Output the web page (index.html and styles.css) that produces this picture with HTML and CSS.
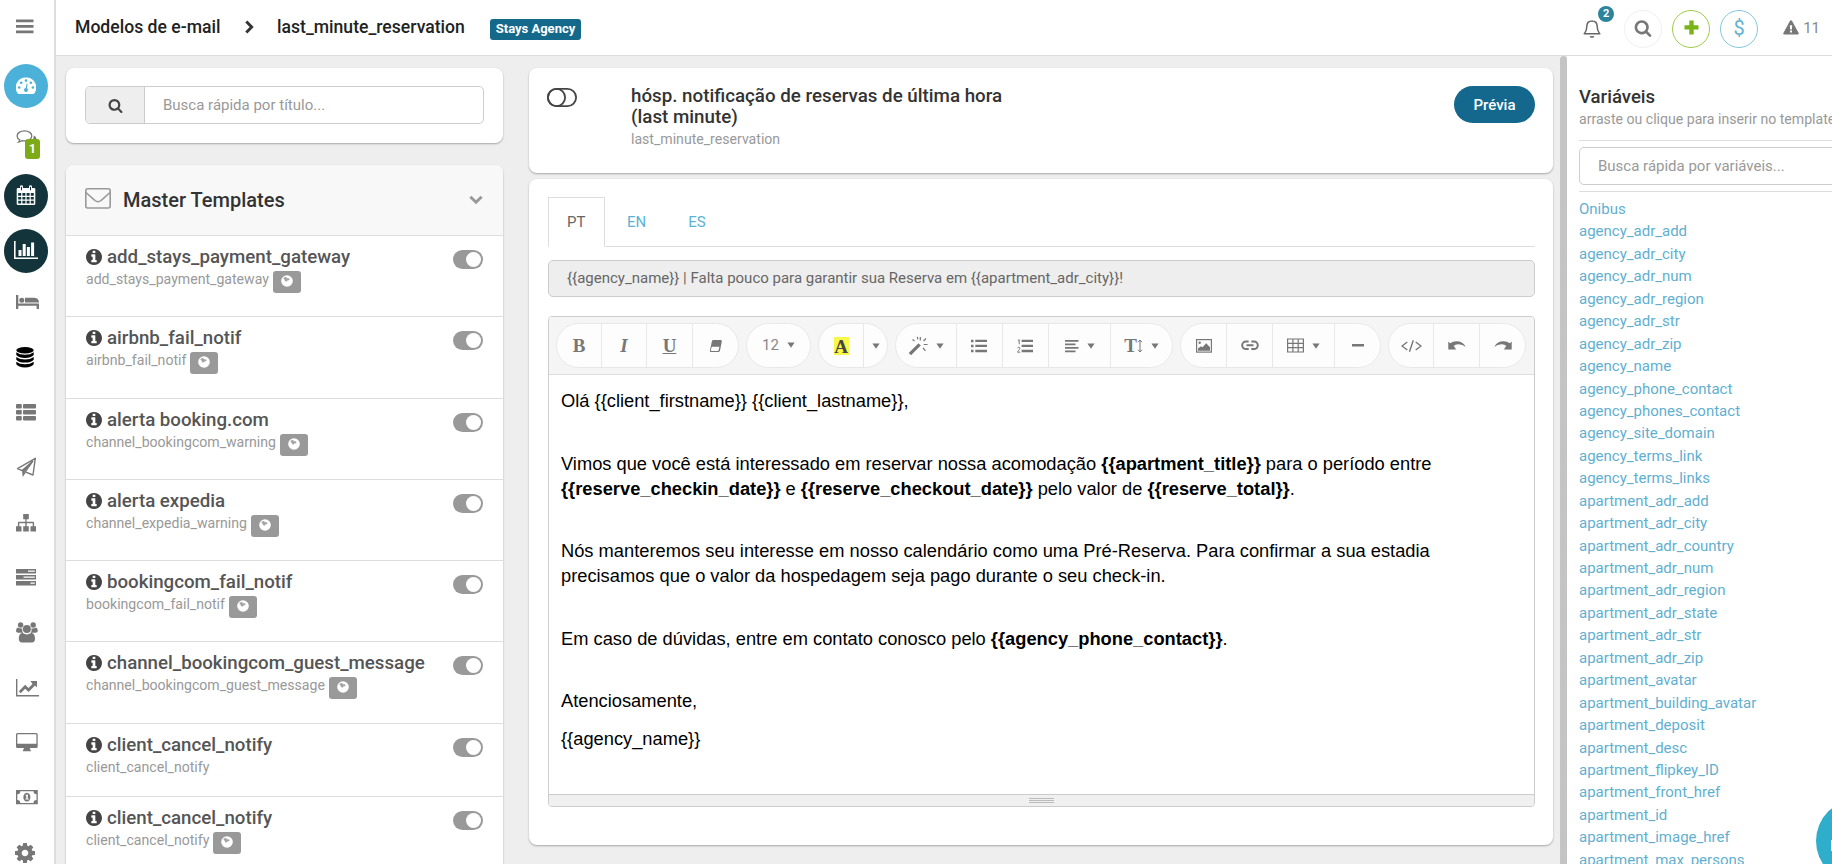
FILE: index.html
```html
<!DOCTYPE html>
<html lang="pt-BR">
<head>
    <meta charset="UTF-8">
    <meta name="viewport" content="width=device-width, initial-scale=1.0">
    <title>Modelos de e-mail</title>
    <link rel="stylesheet" href="styles.css">
</head>
<body>
    <!-- Shared icons -->
    <svg class="sprite" width="0" height="0">
        <symbol id="i-search" viewBox="0 0 1792 1792"><path d="M1216 832q0-185-131.500-316.500t-316.500-131.500-316.500 131.500-131.500 316.500 131.500 316.500 316.500 131.500 316.500-131.500 131.500-316.500zm512 832q0 52-38 90t-90 38q-54 0-90-38l-343-342q-179 124-399 124-143 0-273.500-55.500t-225-150-150-225-55.500-273.500 55.500-273.500 150-225 225-150 273.500-55.500 273.500 55.500 225 150 150 225 55.500 273.500q0 220-124 399l343 343q37 37 37 90z"/></symbol>
        <symbol id="i-info" viewBox="128 128 1536 1536"><path d="M1152 1376v-160q0-14-9-23t-23-9h-96v-512q0-14-9-23t-23-9h-320q-14 0-23 9t-9 23v160q0 14 9 23t23 9h96v320h-96q-14 0-23 9t-9 23v160q0 14 9 23t23 9h448q14 0 23-9t9-23zm-128-896v-160q0-14-9-23t-23-9h-192q-14 0-23 9t-9 23v160q0 14 9 23t23 9h192q14 0 23-9t9-23zm640 416q0 209-103 385.500t-279.500 279.500-385.500 103-385.500-103-279.500-279.500-103-385.500 103-385.500 279.500-279.500 385.500-103 385.500 103 279.500 279.500 103 385.500z"/></symbol>
        <symbol id="i-globe" viewBox="0 0 12 12"><circle cx="6" cy="6" r="5.800" fill="#fff"/><path d="M2.200 3.200 4 2l1.600.3.200 1.200 1.200-.4L8.600 4 8 5.200l-1.700.3-.8 1.300L4 5.900l-.5-1.500z" fill="#a4a4a4"/></symbol>
        <symbol id="i-caret" viewBox="0 0 8 6"><path d="M.4.500h7.200L4 5.700z"/></symbol>
    </svg>

    <div class="app">
        <aside class="sidebar">
            <a class="side-item side-menu"><svg width="18" height="15" viewBox="0 0 18 15"><path d="M0 .5h17.500v2.700H0zM0 6h17.500v2.700H0zM0 11.500h17.500v2.700H0z"/></svg></a>
            <a class="side-item side-dash"><span class="circle circle-blue"><svg width="20" height="18" viewBox="0 0 20 18"><path fill="#fff" d="M10 .5a10 10 0 0 1 8.700 15.300q-.6 1.200-1.600 1.200H2.900q-1 0-1.600-1.200A10 10 0 0 1 10 .5z"/><g fill="#4bb1d8"><circle cx="3.200" cy="10.500" r="1.300"/><circle cx="5.200" cy="5.800" r="1.300"/><circle cx="10" cy="3.600" r="1.300"/><circle cx="14.900" cy="5.800" r="1.300"/><circle cx="16.900" cy="10.500" r="1.300"/><circle cx="10" cy="13" r="2"/><path d="m9.400 12 1.300-5.500 1 .2-1.100 5.600z"/></g></svg></span></a>
            <a class="side-item side-chat"><svg width="22" height="16" viewBox="0 0 22 16"><path d="M8.500.9c4.200 0 7.300 2.300 7.300 5s-3.100 5-7.300 5c-.9 0-1.700-.1-2.400-.3-1 .8-2.100 1.300-3.500 1.500.7-.8 1-1.500 1.100-2.300C2 8.900 1.100 7.500 1.100 5.900c0-2.700 3.200-5 7.400-5z" fill="none" stroke="#777" stroke-width="1.300"/><path d="M18 5.500c1.600 1 2.500 2.200 2.500 4H17z"/></svg><span class="side-badge">1</span></a>
            <a class="side-item"><span class="circle"><svg width="20" height="21" viewBox="0 0 20 21"><path fill="#fff" d="M2 3h2V1.500Q4 .3 5.500.3T7 1.500V3h6V1.500q0-1.200 1.500-1.200T16 1.500V3h2q1.300 0 1.300 1.300v14.400q0 1.300-1.300 1.300H2Q.7 20 .7 18.700V4.300Q.7 3 2 3z"/><g fill="#14343b"><path d="M2.200 8h3v2.800h-3zM6.400 8h3v2.800h-3zM10.600 8h3v2.800h-3zM14.800 8h3v2.800h-3zM2.200 11.900h3v2.700h-3zM6.400 11.900h3v2.700h-3zM10.600 11.900h3v2.700h-3zM14.800 11.900h3v2.700h-3zM2.200 15.800h3v2.700h-3zM6.400 15.800h3v2.700h-3zM10.600 15.800h3v2.700h-3zM14.800 15.800h3v2.700h-3zM5 1.700h1v3.500H5zM14 1.700h1v3.500h-1z"/></g></svg></span></a>
            <a class="side-item"><span class="circle"><svg width="24" height="19" viewBox="0 0 24 19"><path fill="#fff" d="M0 0h1.600v16.500H24V18H0zM4.500 9h3v6h-3zM8.700 3h3v12h-3zM12.900 6h3v9h-3zM17.100 1.500h3V15h-3z"/></svg></span></a>
            <nav class="side-list">
                <a class="side-item"><svg width="23" height="15" viewBox="0 0 23 15"><path d="M0 0h2.300v8.500H23V14h-2.400v-3.200H2.300V14H0z"/><circle cx="5.800" cy="5.200" r="2.500"/><path d="M9 2.800h8.500q5.500 0 5.500 4.800H9z"/></svg></a>
                <a class="side-item side-active"><svg width="18" height="21" viewBox="0 0 18 21"><ellipse cx="9" cy="3.300" rx="8.700" ry="3.200"/><path d="M.3 5.200q3.200 2.600 8.700 2.600t8.700-2.600v2.900q-2.600 2.900-8.700 2.900T.3 8.100zM.3 10q3.200 2.600 8.700 2.600t8.700-2.600v2.700q-2.600 2.900-8.700 2.900T.3 12.700zM.3 14.700q3.200 2.600 8.700 2.600t8.700-2.600v2.600Q15.800 20.400 9 20.400T.3 17.300z"/></svg></a>
                <a class="side-item"><svg width="20" height="17" viewBox="0 0 20 17"><g><rect width="5.800" height="4.500" rx="1"/><rect x="7" width="13" height="4.500" rx="1"/><rect y="6" width="5.800" height="4.500" rx="1"/><rect x="7" y="6" width="13" height="4.500" rx="1"/><rect y="12" width="5.800" height="4.500" rx="1"/><rect x="7" y="12" width="13" height="4.500" rx="1"/></g></svg></a>
                <a class="side-item"><svg width="21" height="21" viewBox="0 0 21 21"><path d="M19.300 1.300 1.500 11.600l4.700 2 10.500-9.300-7.500 10.500 7.800 3.200z" fill="none" stroke="#777" stroke-width="1.400" stroke-linejoin="round"/><path d="M16.800 4 6 13.300l.7 6.700 3-4.200-1.200-.7z"/></svg></a>
                <a class="side-item"><svg width="20" height="18" viewBox="0 0 20 18"><path d="M7.200 0h5.600v5.300h-2.200v2.500h6.500q1 0 1 1v3.500H20v5.200h-5.500v-5.200h2.200V9.200h-6v3.100h2.100v5.200H7.200v-5.200h2.100V9.200h-6v3.100h2.200v5.200H0v-5.200h1.900V8.800q0-1 1-1h6.400V5.300H7.200z"/></svg></a>
                <a class="side-item"><svg width="20" height="17" viewBox="0 0 20 17"><path fill-rule="evenodd" d="M0 0h20v4.500H0zm12 1.500v1.300h6.800V1.500zM0 6h20v4.500H0zm7.500 1.500v1.300h11.300V7.500zM0 12h20v4.500H0zm14.500 1.500v1.300h4.300v-1.300z"/></svg></a>
                <a class="side-item"><svg width="22" height="21" viewBox="0 0 22 21"><circle cx="4.600" cy="3" r="2.700"/><circle cx="17.200" cy="3" r="2.700"/><circle cx="10.900" cy="7" r="4"/><path d="M1.800 5.500q2.800 1.500 4.500.8-.5 2.500.8 4.500H2.300Q0 10.800 0 9q0-2.800 1.800-3.500zM20 5.500q-2.800 1.500-4.500.8.500 2.500-.8 4.500h4.800q2.300 0 2.300-1.800 0-2.800-1.800-3.500zM6.500 10.800q4.400 3.400 8.800 0 3.700.7 3.700 6 0 3.600-3 3.600H6q-3.200 0-3.200-3.600 0-5.300 3.700-6z"/></svg></a>
                <a class="side-item"><svg width="23" height="18" viewBox="0 0 23 18"><path d="M0 0h1.400v16H23v1.500H0zM14.500 2H21v6.500l-2-2-6.500 6.500-3.300-3.300-4.500 4.600-1.900-2 6.400-6.500 3.300 3.300 4-4z"/></svg></a>
                <a class="side-item"><svg width="22" height="19" viewBox="0 0 22 19"><path fill-rule="evenodd" d="M1.500 0h18.700q1.500 0 1.500 1.500v12q0 1.500-1.500 1.500h-6.400q0 1.500 1 2.200v1H6.900v-1q1-.7 1-2.200H1.500Q0 15 0 13.500v-12Q0 0 1.500 0zm.3 1.300q-.5 0-.5.500v9h19.100v-9q0-.5-.5-.5z"/></svg></a>
                <a class="side-item"><svg width="22" height="15" viewBox="0 0 22 15"><path fill-rule="evenodd" d="M0 0h21.800v14.300H0zm4.300 1.300a3 3 0 0 1-3 3V10a3 3 0 0 1 3 3h13.200a3 3 0 0 1 3-3V4.300a3 3 0 0 1-3-3zM10.900 2.800c4.700 0 4.700 8.800 0 8.800s-4.700-8.800 0-8.800zm-1.600 2.800 1 .8v2.300h-1v.9h3.500v-.9h-1V4.500h-.9z"/></svg></a>
                <a class="side-item side-cog"><svg width="20" height="20" viewBox="128 128 1536 1536"><path d="M1152 896q0-106-75-181t-181-75-181 75-75 181 75 181 181 75 181-75 75-181zm512-109v222q0 12-8 23t-20 13l-185 28q-19 54-39 91 35 50 107 138 10 12 10 25t-9 23q-27 37-99 108t-94 71q-12 0-26-9l-138-108q-44 23-91 38-16 136-29 186-7 28-36 28h-222q-14 0-24.500-8.500t-11.500-21.500l-28-184q-49-16-90-37l-141 107q-10 9-25 9-14 0-25-11-126-114-165-168-7-10-7-23 0-12 8-23 15-21 51-66.500t54-70.500q-27-50-41-99l-183-27q-13-2-21-12.500t-8-23.500v-222q0-12 8-23t19-13l186-28q14-46 39-92-40-57-107-138-10-12-10-24 0-10 9-23 26-36 98.500-107.500t94.500-71.500q13 0 26 10l138 107q44-23 91-38 16-136 29-186 7-28 36-28h222q14 0 24.500 8.500t11.500 21.500l28 184q49 16 90 37l142-107q9-9 24-9 13 0 25 10 129 119 165 170 7 8 7 22 0 12-8 23-15 21-51 66.500t-54 70.500q26 50 41 98l183 28q13 2 21 12.500t8 23.500z"/></svg></a>
            </nav>
        </aside>

        <div class="page">
            <header class="topbar">
                <span class="crumb crumb-root">Modelos de e-mail</span>
                <svg class="crumb-arrow" width="9" height="14" viewBox="0 0 9 14"><path d="M1.300 1.400 6.700 7l-5.400 5.600" fill="none" stroke="#333" stroke-width="2.900"/></svg>
                <span class="crumb crumb-current">last_minute_reservation</span>
                <span class="agency-tag">Stays Agency</span>
                <div class="top-actions">
                    <a class="bell"><svg width="18" height="20" viewBox="0 0 18 20"><path d="M9 1.200v1M9 2c3.400 0 5.200 2.300 5.200 5.500 0 4.500 1.300 5.500 2.600 7.300H1.200C2.500 13 3.800 12 3.800 7.500 3.800 4.300 5.600 2 9 2z" fill="none" stroke="#666" stroke-width="1.500" stroke-linejoin="round"/><path d="M6.500 17h5q-.6 2-2.500 2t-2.500-2z"/></svg><span class="bell-count">2</span></a>
                    <a class="round round-search"><svg width="18" height="18"><use href="#i-search"/></svg></a>
                    <a class="round round-plus"><svg width="15" height="15" viewBox="0 0 15 15"><path d="M5.300.500h4.400v4.800h4.800v4.200H9.700v5H5.300v-5H.500V5.300h4.800z" fill="#7ab317"/></svg></a>
                    <a class="round round-money">$</a>
                    <a class="alerts"><svg width="16" height="15" viewBox="0 0 16 15"><path fill-rule="evenodd" d="M8 .3q.7 0 1.100.7l6.500 12q.7 1.400-.9 1.500H1.300q-1.600-.1-.9-1.500L6.900 1Q7.300.3 8 .3zM6.800 5.200l.3 4.200h1.800l.3-4.200zM7 10.500v1.900h2v-1.900z"/></svg>11</a>
                </div>
            </header>

            <div class="content">
                <div class="templates-col">
                    <div class="card search-card">
                        <div class="search-group">
                            <span class="search-addon"><svg width="15" height="15"><use href="#i-search"/></svg></span>
                            <div class="search-field">Busca rápida por título...</div>
                        </div>
                    </div>

                    <div class="card templates-card">
                        <div class="templates-head">
                            <svg width="26" height="21" viewBox="0 0 26 21"><rect x=".8" y=".8" width="24.400" height="19.200" rx="2" fill="none" stroke="#999" stroke-width="1.600"/><path d="M1 4.500c3.500 3.300 6 5.300 9 8 2 1.700 4 1.700 6 0 3-2.700 5.500-4.700 9-8" fill="none" stroke="#999" stroke-width="1.600"/></svg>
                            <h2>Master Templates</h2>
                            <svg width="14" height="10" viewBox="0 0 14 10"><path d="M1.400 1.700 7 7.200l5.600-5.500" fill="none" stroke="#999" stroke-width="3"/></svg>
                        </div>
                        <div class="template-row">
                            <div><h3><svg><use href="#i-info"/></svg>add_stays_payment_gateway</h3><p>add_stays_payment_gateway<span class="globe"><svg><use href="#i-globe"/></svg></span></p></div>
                            <span class="toggle"></span>
                        </div>
                        <div class="template-row">
                            <div><h3><svg><use href="#i-info"/></svg>airbnb_fail_notif</h3><p>airbnb_fail_notif<span class="globe"><svg><use href="#i-globe"/></svg></span></p></div>
                            <span class="toggle"></span>
                        </div>
                        <div class="template-row">
                            <div><h3><svg><use href="#i-info"/></svg>alerta booking.com</h3><p>channel_bookingcom_warning<span class="globe"><svg><use href="#i-globe"/></svg></span></p></div>
                            <span class="toggle"></span>
                        </div>
                        <div class="template-row">
                            <div><h3><svg><use href="#i-info"/></svg>alerta expedia</h3><p>channel_expedia_warning<span class="globe"><svg><use href="#i-globe"/></svg></span></p></div>
                            <span class="toggle"></span>
                        </div>
                        <div class="template-row">
                            <div><h3><svg><use href="#i-info"/></svg>bookingcom_fail_notif</h3><p>bookingcom_fail_notif<span class="globe"><svg><use href="#i-globe"/></svg></span></p></div>
                            <span class="toggle"></span>
                        </div>
                        <div class="template-row">
                            <div><h3><svg><use href="#i-info"/></svg>channel_bookingcom_guest_message</h3><p>channel_bookingcom_guest_message<span class="globe"><svg><use href="#i-globe"/></svg></span></p></div>
                            <span class="toggle"></span>
                        </div>
                        <div class="template-row template-row-short">
                            <div><h3><svg><use href="#i-info"/></svg>client_cancel_notify</h3><p>client_cancel_notify</p></div>
                            <span class="toggle"></span>
                        </div>
                        <div class="template-row">
                            <div><h3><svg><use href="#i-info"/></svg>client_cancel_notify</h3><p>client_cancel_notify<span class="globe"><svg><use href="#i-globe"/></svg></span></p></div>
                            <span class="toggle"></span>
                        </div>
                    </div>
                </div>

                <main class="editor-col">
                    <div class="card title-card">
                        <svg class="title-switch" width="30" height="19" viewBox="0 0 30 19"><rect x=".9" y=".9" width="28.200" height="17.200" rx="8.600"/><circle cx="9.500" cy="9.500" r="8.600"/></svg>
                        <div class="title-text">
                            <h1>hósp. notificação de reservas de última hora<br>(last minute)</h1>
                            <p>last_minute_reservation</p>
                        </div>
                        <button class="preview-btn">Prévia</button>
                    </div>

                    <div class="card editor-card">
                        <div class="tabs">
                            <a class="tab tab-active">PT</a>
                            <a class="tab">EN</a>
                            <a class="tab">ES</a>
                        </div>
                        <div class="subject">{{agency_name}} | Falta pouco para garantir sua Reserva em {{apartment_adr_city}}!</div>

                        <div class="editor">
                            <div class="toolbar">
                                <div class="btn-group">
                                    <span class="tool t45 glyph">B</span>
                                    <span class="tool t45 glyph italic">I</span>
                                    <span class="tool t46 glyph underline">U</span>
                                    <span class="tool t45"><svg width="14" height="14" viewBox="0 0 14 14"><path fill-rule="evenodd" d="M4.200 1h7.500q1.500 0 1.100 1.500L11 11.500Q10.600 13 9.200 13H2Q.5 13 .9 11.500L2.900 2.300Q3.200 1 4.200 1zM2.700 7.800l-.8 3.400q-.1.700.5.700h6.400q.6 0 .8-.6l.8-3.500z"/></svg></span>
                                </div>
                                <div class="btn-group"><span class="tool t63 size">12<svg><use href="#i-caret"/></svg></span></div>
                                <div class="btn-group">
                                    <span class="tool t45 glyph"><mark>A</mark></span>
                                    <span class="tool t23"><svg class="caret"><use href="#i-caret"/></svg></span>
                                </div>
                                <div class="btn-group">
                                    <span class="tool t61"><svg width="20" height="20" viewBox="0 0 20 20"><path d="M.7 17 10.500 7.200l2.300 2.300L3 19.300z"/><path d="M12.300 1v3.500M18 2.500 15.500 5M15.800 8.500h3.800M15 12l2.500 2.800M4.500 3.500 6.500 5M9.300.8l.6 2.500" fill="none" stroke="#777" stroke-width="1.200"/></svg><svg class="caret"><use href="#i-caret"/></svg></span>
                                    <span class="tool t46"><svg width="17" height="14" viewBox="0 0 17 14"><path d="M0 .7h2.500v2.500H0zM0 5.700h2.500v2.500H0zM0 10.800h2.500v2.500H0zM4.300.7H16v2.400H4.300zM4.300 5.700H16v2.400H4.300zM4.300 10.800H16v2.400H4.300z"/></svg></span>
                                    <span class="tool t46"><svg width="17" height="14" viewBox="0 0 17 14"><path d="M4.600.7H16v2.400H4.600zM4.600 5.700H16v2.400H4.600zM4.600 10.800H16v2.400H4.600z"/><path d="M.8 1.600 2.200.7v4.600M.5 8.900C1.200 7.800 3 8 2.900 9.400 2.800 10.600.7 12 .5 13.200h2.700" fill="none" stroke="#777"/></svg></span>
                                    <span class="tool t62"><svg width="14" height="14" viewBox="0 0 14 14"><path d="M0 1h13.500v1.800H0zM0 4.500h10.500v1.800H0zM0 8h13.500v1.800H0zM0 11.500h10.500v1.800H0z"/></svg><svg class="caret"><use href="#i-caret"/></svg></span>
                                    <span class="tool t61 glyph">T<svg width="6" height="14" viewBox="0 0 6 14"><path d="M3 2v10M1 3.200 3 1l2 2.200M1 10.800 3 13l2-2.200" fill="none" stroke="#777"/></svg><svg class="caret"><use href="#i-caret"/></svg></span>
                                </div>
                                <div class="btn-group">
                                    <span class="tool t46"><svg width="16" height="14" viewBox="0 0 16 14"><rect x=".6" y=".6" width="14.800" height="12.500" fill="none" stroke="#777" stroke-width="1.200"/><circle cx="3.700" cy="3.700" r="1.200"/><path d="M2 11.800V9.500L5 7.200l1.500 1L10.200 4.300l3.800 4v3.500z"/></svg></span>
                                    <span class="tool t46"><svg width="18" height="11" viewBox="0 0 18 11"><path d="M7.700 1.500H5a3.800 3.800 0 0 0 0 7.600h2.700M10.300 1.500H13a3.800 3.800 0 0 1 0 7.600h-2.700M5.500 5.300h7" fill="none" stroke="#777" stroke-width="2"/></svg></span>
                                    <span class="tool t62"><svg width="17" height="15" viewBox="0 0 17 15"><path d="M.6 1h15.800v13H.6zM.6 5.300h15.800M.6 9.600h15.800M5.900 1v13M11.200 1v13" fill="none" stroke="#777" stroke-width="1.200"/></svg><svg class="caret"><use href="#i-caret"/></svg></span>
                                    <span class="tool t45"><svg width="12" height="3"><path d="M0 0h12v2.500H0z"/></svg></span>
                                </div>
                                <div class="btn-group">
                                    <span class="tool t45"><svg width="21" height="12" viewBox="0 0 21 12"><path d="M6.300 2 1 6l5.300 4M14.700 2 20 6l-5.300 4M12.300.3 8.500 11.700" fill="none" stroke="#777" stroke-width="1.400"/></svg></span>
                                    <span class="tool t46"><svg width="18" height="10" viewBox="0 0 18 10"><path d="M.3.500 2.200 2.300Q5 0 9.500.3 15.500.8 17.700 6q-3-3-7.700-2.800-2.700.2-4.300 1.900l2.500 3.300H.3z"/></svg></span>
                                    <span class="tool t45"><svg width="18" height="10" viewBox="0 0 18 10"><path d="M17.700.5 15.800 2.300Q13 0 8.500.3 2.500.8.3 6q3-3 7.700-2.800 2.700.2 4.300 1.900L9.800 8.400h7.900z"/></svg></span>
                                </div>
                            </div>

                            <div class="mail-body">
                                <p>Olá {{client_firstname}} {{client_lastname}},<br><br></p>
                                <p>Vimos que você está interessado em reservar nossa acomodação <b>{{apartment_title}}</b> para o período entre<br><b>{{reserve_checkin_date}}</b> e <b>{{reserve_checkout_date}}</b> pelo valor de <b>{{reserve_total}}</b>.<br><br></p>
                                <p>Nós manteremos seu interesse em nosso calendário como uma Pré-Reserva. Para confirmar a sua estadia<br>precisamos que o valor da hospedagem seja pago durante o seu check-in.<br><br></p>
                                <p>Em caso de dúvidas, entre em contato conosco pelo <b>{{agency_phone_contact}}</b>.<br><br></p>
                                <p>Atenciosamente,</p>
                                <p>{{agency_name}}</p>
                            </div>
                            <div class="resize-bar"><span></span></div>
                        </div>
                    </div>
                </main>

                <div class="scroll-thumb"></div>

                <aside class="vars">
                    <h2>Variáveis</h2>
                    <p class="vars-hint">arraste ou clique para inserir no template</p>
                    <div class="vars-search"><div class="vars-input">Busca rápida por variáveis...</div></div>
                    <ul class="vars-list">
                        <li>Onibus</li>
                        <li>agency_adr_add</li>
                        <li>agency_adr_city</li>
                        <li>agency_adr_num</li>
                        <li>agency_adr_region</li>
                        <li>agency_adr_str</li>
                        <li>agency_adr_zip</li>
                        <li>agency_name</li>
                        <li>agency_phone_contact</li>
                        <li>agency_phones_contact</li>
                        <li>agency_site_domain</li>
                        <li>agency_terms_link</li>
                        <li>agency_terms_links</li>
                        <li>apartment_adr_add</li>
                        <li>apartment_adr_city</li>
                        <li>apartment_adr_country</li>
                        <li>apartment_adr_num</li>
                        <li>apartment_adr_region</li>
                        <li>apartment_adr_state</li>
                        <li>apartment_adr_str</li>
                        <li>apartment_adr_zip</li>
                        <li>apartment_avatar</li>
                        <li>apartment_building_avatar</li>
                        <li>apartment_deposit</li>
                        <li>apartment_desc</li>
                        <li>apartment_flipkey_ID</li>
                        <li>apartment_front_href</li>
                        <li>apartment_id</li>
                        <li>apartment_image_href</li>
                        <li>apartment_max_persons</li>
                    </ul>
                </aside>
            </div>
        </div>
    </div>

    <a class="chat-bubble"><span></span></a>
</body>
</html>
```
FILE: styles.css
```css
* {
    box-sizing: border-box;
}

body {
    margin: 0;
    height: 864px;
    overflow: hidden;
    background: #eee;
    font-family: Roboto, sans-serif;
    font-size: 15px;
    color: #333;
}

h1, h2, h3, p, ul {
    margin: 0;
    padding: 0;
}

h1, h2, h3 {
    font-weight: 500;
}

svg {
    fill: #777;
    flex: none;
    display: block;
}

.sprite {
    position: absolute;
}

.app {
    display: flex;
    height: 864px;
    overflow: hidden;
}

/* Left icon bar */
.sidebar {
    width: 56px;
    flex: none;
    background: #fff;
    border-right: 2px solid #ddd;
    overflow: hidden;
}

.side-item {
    height: 55px;
    padding-left: 16px;
    display: flex;
    align-items: center;
}

.side-item:has(.circle) {
    padding-left: 4px;
}

.side-menu {
    height: 52px;
}

.side-dash {
    height: 68px;
}

.side-chat {
    height: 48px;
    align-items: flex-start;
    padding-top: 10px;
    position: relative;
}

.side-badge {
    position: absolute;
    left: 25px;
    top: 19px;
    width: 15px;
    height: 20px;
    border-radius: 3px;
    background: #7dab17;
    color: #fff;
    font-size: 12px;
    font-weight: 700;
    line-height: 20px;
    text-align: center;
}

.circle {
    width: 44px;
    height: 44px;
    border-radius: 50%;
    background: #14343b;
    display: flex;
    align-items: center;
    justify-content: center;
}

.circle-blue {
    background: #4bb1d8;
}

.side-list {
    margin-top: -3px;
}

.side-active svg {
    fill: #000;
}

.side-cog {
    padding-left: 15px;
}

/* Top bar */
.page {
    flex: 1;
    min-width: 0;
    display: flex;
    flex-direction: column;
}

.topbar {
    height: 56px;
    flex: none;
    background: #fff;
    border-bottom: 1px solid #ddd;
    display: flex;
    padding-left: 19px;
}

.crumb {
    font-size: 17.6px;
    font-weight: 500;
    line-height: 54px;
    color: #222;
    white-space: nowrap;
}

.crumb-root {
    width: 170px;
}

.crumb-arrow {
    margin: 20px 23px 0 0;
}

.crumb-current {
    width: 213px;
}

.agency-tag {
    width: 91px;
    height: 21px;
    margin-top: 19px;
    border-radius: 3px;
    background: #14688a;
    color: #fff;
    font-size: 13px;
    font-weight: 700;
    line-height: 20px;
    text-align: center;
}

.top-actions {
    margin-left: auto;
    padding-right: 12px;
    display: flex;
}

.bell {
    width: 41px;
    padding-top: 19px;
    position: relative;
}

.bell-count {
    position: absolute;
    left: 15px;
    top: 6px;
    width: 16px;
    height: 16px;
    border-radius: 50%;
    background: #2c849c;
    color: #fff;
    font-size: 11px;
    font-weight: 700;
    line-height: 16px;
    text-align: center;
}

.round {
    width: 38px;
    height: 38px;
    margin: 10px 10px 0 0;
    border: 1px solid #f0f0f0;
    border-radius: 50%;
    display: flex;
    align-items: center;
    justify-content: center;
}

.round svg {
    margin-bottom: 3px;
}

.round-plus {
    border-color: #a0cb4c;
}

.round-money {
    border-color: #86c6e0;
    color: #62b2d4;
    font-size: 20px;
    padding-bottom: 2px;
}

.alerts {
    display: flex;
    gap: 4px;
    margin-left: 15px;
    padding-top: 20px;
    color: #888;
    font-size: 15px;
    line-height: 17px;
}

/* Columns */
.content {
    flex: 1;
    min-height: 0;
    display: flex;
    padding: 0 0 0 10px;
}

.card {
    background: #fff;
    border-radius: 8px;
    box-shadow: 0 1px 2px rgba(0, 0, 0, 0.3);
}

.templates-col {
    width: 437px;
    margin: 12px 26px 0 0;
    flex: none;
}

.search-card {
    height: 75px;
    padding: 18px 19px;
    margin-bottom: 22px;
}

.search-group {
    height: 38px;
    border: 1px solid #ccc;
    border-radius: 5px;
    display: flex;
    overflow: hidden;
}

.search-addon {
    width: 59px;
    background: #eee;
    border-right: 1px solid #ccc;
    display: flex;
    align-items: center;
    justify-content: center;
}

.search-addon svg {
    fill: #444;
}

.search-field {
    padding-left: 18px;
    line-height: 36px;
    color: #999;
}

.templates-head {
    height: 71px;
    padding: 0 20px 0 19px;
    background: #f8f8f8;
    border-bottom: 1px solid #ddd;
    border-radius: 8px 8px 0 0;
    display: flex;
    align-items: center;
}

.templates-head svg:first-child {
    margin-bottom: 4px;
}

.templates-head h2 {
    flex: 1;
    margin-left: 12px;
    font-size: 20px;
}

.template-row {
    height: 81.3px;
    padding: 9px 20px 0 20px;
    border-bottom: 1px solid #ddd;
    display: flex;
    justify-content: space-between;
}

.template-row-short {
    height: 73px;
}

.template-row h3 {
    display: flex;
    align-items: center;
    gap: 5px;
    height: 24px;
    font-size: 18.7px;
    color: #555;
}

.template-row h3 svg {
    width: 16px;
    height: 16px;
    fill: #444;
}

.template-row p {
    display: flex;
    gap: 4px;
    font-size: 14.1px;
    line-height: 21px;
    color: #999;
}

.globe {
    width: 28px;
    height: 22px;
    margin-top: 2px;
    border-radius: 3px;
    background: #999;
    padding: 4px 8px;
}

.globe svg {
    width: 12px;
    height: 12px;
}

.toggle {
    width: 30px;
    height: 19px;
    margin-top: 5px;
    border-radius: 10px;
    background: #999;
    padding: 2px;
}

.toggle::after {
    content: "";
    display: block;
    width: 15px;
    height: 15px;
    margin-left: 11px;
    border-radius: 50%;
    background: #fff;
}

/* Template editor */
.editor-col {
    width: 1024px;
    margin: 12px 7px 0 0;
    flex: none;
}

.title-card {
    height: 105px;
    margin-bottom: 6px;
    padding: 18px 18px 0 18px;
    display: flex;
}

.title-switch {
    margin: 2px 54px 0 0;
    fill: none;
    stroke: #444;
    stroke-width: 1.8;
}

.title-text {
    flex: 1;
}

.title-text h1 {
    font-size: 18.75px;
    line-height: 21px;
}

.title-text p {
    font-size: 14.1px;
    line-height: 22px;
    color: #999;
}

.preview-btn {
    width: 81px;
    height: 37px;
    border: none;
    border-radius: 19px;
    background: #14688e;
    color: #fff;
    font-family: inherit;
    font-size: 15px;
    font-weight: 500;
}

.editor-card {
    height: 666px;
    padding: 18px 18px 0 19px;
}

.tabs {
    height: 50px;
    border-bottom: 1px solid #ddd;
    display: flex;
    gap: 2px;
}

.tab {
    height: 50px;
    padding: 0 20px;
    line-height: 50px;
    color: #5bb2d2;
}

.tab-active {
    width: 57px;
    padding: 0 18px;
    border: 1px solid #ddd;
    border-bottom-color: #fff;
    color: #666;
    line-height: 48px;
}

.subject {
    height: 37px;
    margin: 13px 0 19px;
    padding-left: 18px;
    border: 1px solid #ccc;
    border-radius: 5px;
    background: #eee;
    color: #666;
    line-height: 34px;
}

.editor {
    height: 491px;
    border: 1px solid #ccc;
    border-radius: 4px;
    display: flex;
    flex-direction: column;
    overflow: hidden;
}

.toolbar {
    height: 58px;
    flex: none;
    padding: 6px 7px;
    background: #f5f5f5;
    border-bottom: 1px solid #ddd;
    display: flex;
    gap: 7px;
}

.btn-group {
    height: 45px;
    border: 1px solid #e8e8e8;
    border-radius: 23px;
    background: #fdfdfd;
    display: flex;
    overflow: hidden;
}

.tool {
    display: flex;
    align-items: center;
    justify-content: center;
    color: #777;
    border-right: 1px solid #e8e8e8;
}

.tool:last-child {
    border-right: none;
}

.t23 { width: 23px; }
.t45 { width: 45px; }
.t46 { width: 46px; }
.t61 { width: 61px; }
.t62 { width: 62px; }
.t63 { width: 63px; }

.glyph {
    font-family: "Liberation Serif", serif;
    font-size: 19px;
    font-weight: 700;
}

.italic {
    font-style: italic;
}

.underline {
    text-decoration: underline;
}

.glyph mark {
    background: #f8f84a;
    color: #444;
    width: 15px;
    height: 18px;
    line-height: 20px;
    text-align: center;
}

.size {
    color: #888;
    padding-bottom: 2px;
}

.size svg,
.caret {
    width: 8px;
    height: 6px;
}

.size svg,
.tool svg + .caret {
    margin-left: 8px;
}

.mail-body {
    flex: 1;
    padding: 13px 12px 0;
    font-family: "Liberation Sans", Arial, sans-serif;
    font-size: 18.3px;
    line-height: 25px;
    color: #000;
    white-space: nowrap;
}

.mail-body p {
    margin-bottom: 12.5px;
}

.resize-bar {
    height: 12px;
    background: #f0f0f0;
    border-top: 1px solid #ccc;
    padding-top: 3px;
}

.resize-bar span {
    display: block;
    width: 25px;
    height: 5px;
    margin: 0 auto;
    border: solid #bbb;
    border-width: 1px 0;
    background: linear-gradient(#f0f0f0 1px, #bbb 1px, #bbb 2px, #f0f0f0 2px);
}

/* Variables panel */
.scroll-thumb {
    width: 7px;
    flex: none;
    background: #c4c4c4;
    border-radius: 4px 4px 0 0;
}

.vars {
    flex: 1;
    min-width: 0;
    padding: 30px 0 0 12px;
    background: #fff;
    overflow: hidden;
    white-space: nowrap;
}

.vars h2 {
    font-size: 18.6px;
    line-height: 22px;
}

.vars-hint {
    height: 33px;
    font-size: 14.1px;
    line-height: 22px;
    color: #999;
    border-bottom: 1px solid #ddd;
}

.vars-search {
    height: 51px;
    padding-top: 6px;
    border-bottom: 1px solid #ddd;
}

.vars-input {
    height: 38px;
    width: 290px;
    padding-left: 18px;
    border: 1px solid #ccc;
    border-radius: 5px;
    line-height: 36px;
    color: #999;
}

.vars-list {
    padding-top: 6px;
    list-style: none;
    line-height: 22.43px;
    color: #5fb0d0;
}

.chat-bubble {
    position: fixed;
    left: 1816px;
    top: 799px;
    width: 84px;
    height: 84px;
    border-radius: 50%;
    background: #2eaecb;
}

.chat-bubble span {
    position: absolute;
    left: 15px;
    top: 41px;
    width: 30px;
    height: 11px;
    background: #fff;
}
```
